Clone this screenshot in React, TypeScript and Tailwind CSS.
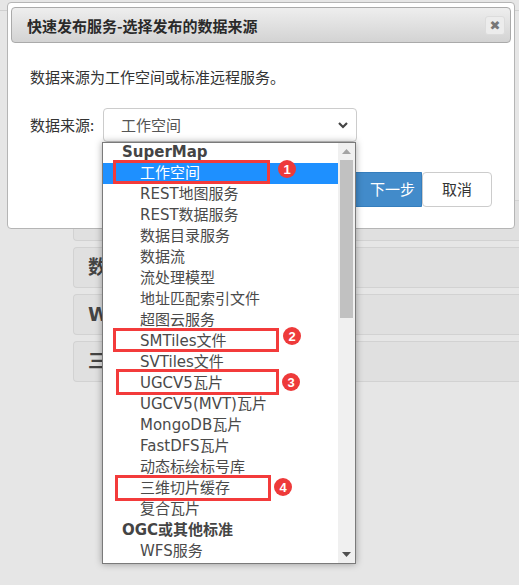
import React from "react";

const items: { t: string; g?: boolean; sel?: boolean }[] = [
  { t: "SuperMap", g: true },
  { t: "工作空间", sel: true },
  { t: "REST地图服务" },
  { t: "REST数据服务" },
  { t: "数据目录服务" },
  { t: "数据流" },
  { t: "流处理模型" },
  { t: "地址匹配索引文件" },
  { t: "超图云服务" },
  { t: "SMTiles文件" },
  { t: "SVTiles文件" },
  { t: "UGCV5瓦片" },
  { t: "UGCV5(MVT)瓦片" },
  { t: "MongoDB瓦片" },
  { t: "FastDFS瓦片" },
  { t: "动态标绘标号库" },
  { t: "三维切片缓存" },
  { t: "复合瓦片" },
  { t: "OGC或其他标准", g: true },
  { t: "WFS服务" },
];

const marks = [
  { n: "1", box: "left-[113px] top-[160px] w-[157px] h-[24px]", badge: "left-[278px] top-[160px]" },
  { n: "2", box: "left-[113px] top-[328px] w-[166px] h-[24px]", badge: "left-[283px] top-[327px]" },
  { n: "3", box: "left-[116px] top-[369px] w-[163px] h-[26px]", badge: "left-[282px] top-[373px]" },
  { n: "4", box: "left-[115px] top-[475px] w-[156px] h-[26px]", badge: "left-[274px] top-[478px]" },
];

export default function App() {
  const font = { fontFamily: '"DejaVu Sans", "Noto Sans CJK SC", sans-serif' };
  const cjk = { fontFamily: '"Noto Sans CJK SC", "Liberation Sans", sans-serif' };
  return (
    <div className="relative w-[519px] h-[585px] overflow-hidden bg-[#e6e6e6]" style={cjk}>
      {/* page behind */}
      <div className="h-[11px] border-b border-[#d0d0d0]" />
      <div className="ml-[73px] mt-[189px] flex flex-col gap-[6px]">
        {["", "数", "W", "三"].map((t, i) => (
          <div
            key={i}
            className="h-[41px] rounded-l-[4px] border border-r-0 border-[#d2d2d2] bg-[#e0e0e0] flex items-center pl-[14px] text-[19px] font-bold text-[#444]"
            style={font}
          >
            {t}
          </div>
        ))}
      </div>

      {/* dialog */}
      <div className="absolute left-[7px] top-[2px] w-[508px] h-[227px] bg-white border border-[#b5b5b5] rounded-[4px] px-[3px] pt-[4px]">
        <div className="h-[36px] rounded-[4px] border border-[#aaaaaa] bg-gradient-to-b from-[#eeeeee] to-[#d3d3d3] flex items-center justify-between pl-[15px] pr-[5px]">
          <span className="text-[15px] font-bold text-[#2a2a2a] leading-none">快速发布服务-选择发布的数据来源</span>
          <div className="w-[20px] h-[19px] rounded-[3px] bg-[#ececec] border border-[#dcdcdc] flex items-center justify-center text-[#777] text-[13px] font-bold leading-none" style={{ fontFamily: '"DejaVu Sans", sans-serif' }}>
            ✖
          </div>
        </div>
        <div className="pl-[19px] pt-[24px] text-[15px] text-[#333] leading-[20px]">数据来源为工作空间或标准远程服务。</div>
        <div className="flex items-center pl-[19px] mt-[21px]">
          <span className="text-[15px] text-[#333] w-[73px]">数据来源:</span>
          <div className="w-[254px] h-[34px] rounded-[4px] border border-[#cccccc] flex items-center justify-between pl-[17px] pr-[8px] text-[15px] text-[#555]">
            <span>工作空间</span>
            <svg width="10" height="8" viewBox="0 0 10 8">
              <path d="M1 2 L5 6 L9 2" stroke="#444" strokeWidth="2.2" fill="none" />
            </svg>
          </div>
        </div>
        <div className="flex justify-end pr-[19px] mt-[30px]">
          <div className="w-[77px] h-[35px] bg-[#428bca] border border-[#357ebd] rounded-l-[4px] text-white text-[15px] flex items-center justify-center pl-[18px]">下一步</div>
          <div className="w-[70px] h-[35px] bg-white border border-[#cccccc] rounded-[4px] text-[#333] text-[15px] flex items-center justify-center">取消</div>
        </div>
      </div>

      {/* dropdown */}
      <div className="absolute left-[102px] top-[142px] w-[254px] h-[422px] bg-white border border-[#7a7a7a] shadow-[0_0_7px_rgba(0,0,0,0.35)] overflow-hidden flex">
        <div className="flex-1 overflow-hidden">
          <div className="mt-[-1px]">
            {items.map((it, i) => (
              <div
                key={i}
                className={
                  "h-[21px] flex items-center text-[15px] leading-none whitespace-nowrap " +
                  (it.g ? "pl-[19px] font-bold text-[#444] " : "pl-[37px] text-[#4a4a4a] ") +
                  (it.sel ? "bg-[#1e90ff] text-white" : "")
                }
                style={font}
              >
                {it.t}
              </div>
            ))}
          </div>
        </div>
        <div className="w-[17px] bg-[#f0f0f0] flex flex-col items-center">
          <div className="h-[17px] flex items-center justify-center">
            <svg width="9" height="5" viewBox="0 0 9 5"><path d="M0 5 L4.5 0 L9 5 Z" fill="#a3a3a3" /></svg>
          </div>
          <div className="w-[13px] h-[158px] bg-[#c1c1c1]" />
          <div className="flex-1" />
          <div className="h-[17px] flex items-center justify-center">
            <svg width="9" height="5" viewBox="0 0 9 5"><path d="M0 0 L4.5 5 L9 0 Z" fill="#505050" /></svg>
          </div>
        </div>
      </div>

      {/* annotations */}
      {marks.map((m) => (
        <React.Fragment key={m.n}>
          <div className={"absolute border-[3px] border-[#f33b3b] " + m.box} />
          <div
            className={"absolute w-[18px] h-[18px] rounded-full bg-[#ee3a3a] text-white text-[13px] font-bold flex items-center justify-center leading-none " + m.badge}
            style={{ fontFamily: '"Liberation Sans", sans-serif' }}
          >
            {m.n}
          </div>
        </React.Fragment>
      ))}
    </div>
  );
}
